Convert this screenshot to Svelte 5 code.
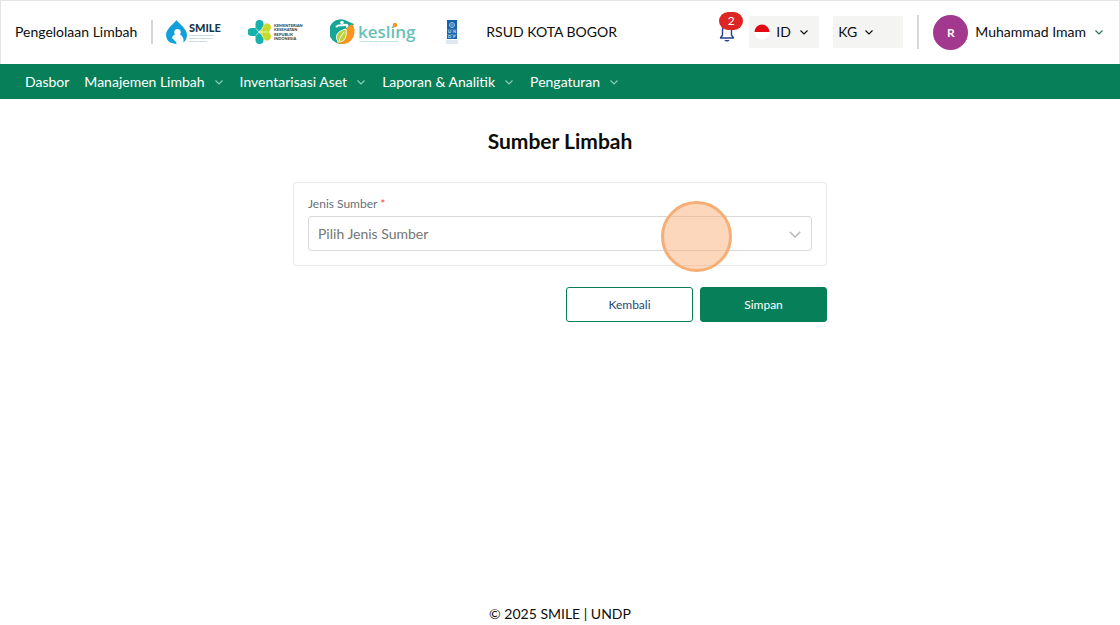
<script lang="ts">
  interface MenuItem {
    label: string;
    children: boolean;
  }

  const menu: MenuItem[] = [
    { label: 'Dasbor', children: false },
    { label: 'Manajemen Limbah', children: true },
    { label: 'Inventarisasi Aset', children: true },
    { label: 'Laporan & Analitik', children: true },
    { label: 'Pengaturan', children: true }
  ];

  const sources = ['Internal', 'Eksternal'];

  let source = $state('');
  let language = $state('ID');
  let unit = $state('KG');
  let notifications = $state(2);
</script>

{#snippet chevron(size: number)}
  <svg class="chevron" width={size} height={size} viewBox="0 0 12 12" aria-hidden="true">
    <path d="M2.5 4.5 6 8l3.5-3.5" fill="none" stroke="currentColor" stroke-width="1.1" />
  </svg>
{/snippet}

<div class="page">
  <header class="topbar">
    <span class="app-name">Pengelolaan Limbah</span>
    <span class="divider short"></span>

    <div class="logos">
      <svg width="56" height="28" viewBox="0 0 56 28" role="img" aria-label="SMILE">
        <path d="M10.500 2C13 6 21 10.500 21 17a10 10 0 0 1-3.500 7.500L10 26l-6-1.500A10 10 0 0 1 0 17C0 10.500 8 6 10.500 2Z" fill="#12a0dc" />
        <path d="M11.500 11c2 0 3.300 1.500 3.300 3.300 0 1-.3 1.700-.8 2.300 2.500 1.400 4 3.800 3.500 7.900L11 27l-1-3-4-4c.4-1.600 1.400-2.700 3-3.400-.5-.6-.8-1.300-.8-2.300 0-1.800 1.300-3.300 3.300-3.300Z" fill="#fff" />
        <path d="M3 24.500 5 27l-5-1z" fill="#fff" />
        <text x="23" y="14" class="smile">SMILE</text>
        <text x="23" y="18" class="tiny">Sistem Monitoring Imunisasi</text>
        <text x="23" y="21" class="tiny">Logistik dan Limbah Secara</text>
        <text x="23" y="24" class="tiny">Elektronik Indonesia</text>
      </svg>

      <svg width="56" height="28" viewBox="0 0 56 28" role="img" aria-label="Kementerian Kesehatan Republik Indonesia">
        <g fill="none" stroke-width="8" stroke-linecap="round" stroke-linejoin="round">
          <path d="M3.500 14H8M11.500 6v4M11.500 18v4" stroke="#17b2b0" />
          <path d="M19 9.500 15.500 14l3.500 4.500" stroke="#c5da2e" />
        </g>
        <path d="M7.500 10h8v8h-8z" fill="#17b2b0" />
        <path d="M11 14l4.500-4.500v9z" fill="#e2e52f" />
        <path d="m8 10.500 3 3.500-3 3.500M16 8.500 11 14l5 5.500M11 14h9" fill="none" stroke="#fff" stroke-width=".7" />
        <text x="26" y="9" class="ministry">KEMENTERIAN</text>
        <text x="26" y="13" class="ministry">KESEHATAN</text>
        <text x="26" y="18" class="ministry">REPUBLIK</text>
        <text x="26" y="22" class="ministry">INDONESIA</text>
      </svg>

      <svg width="90" height="28" viewBox="0 0 90 28" role="img" aria-label="Kesling">
        <path d="M17 3A12 12 0 1 0 5 24c3 2 7 3 11 1 5-3 2-10 8-19Z" fill="#16a697" />
        <path d="M22 6a12.500 12.500 0 0 1-9 20c-3 0-5-1-7-2 9 0 8-8 9-11s4-5 7-7Z" fill="#f7951f" />
        <path d="M8 24c-4-7 0-11 8-13 1 8-1 13-8 13Z" fill="#b8d436" stroke="#fff" />
        <path d="M9 23c1-4 3-6 5-9" fill="none" stroke="#fff" />
        <path d="M6 9c3-3 6-1 8-2 3-1 5 1 2 2" fill="none" stroke="#fff" stroke-width="2" />
        <circle cx="12" cy="4.500" r="1.800" fill="#fff" />
        <text x="28" y="20" class="kesling">kesling</text>
        <circle cx="65" cy="7" r="2.200" fill="#f7951f" />
        <text x="29" y="24" class="tiny teal">Kesehatan Lingkungan dan Limbah Fasyankes</text>
      </svg>

      <svg width="12" height="28" viewBox="0 0 12 28" role="img" aria-label="UNDP">
        <path d="M1 2h10v19H1z" fill="#1763ac" />
        <circle cx="6" cy="7" r="2.500" fill="none" stroke="#9fc3e4" />
        <path d="M3 7h6M6 4v6" stroke="#9fc3e4" stroke-width=".6" />
        <path d="M1 11.500h10M6 11.500V21M1 16.500h10" stroke="#6f9fcd" stroke-width=".5" />
        <text x="2" y="15" class="undp">U</text>
        <text x="7" y="15" class="undp">N</text>
        <text x="2" y="20" class="undp">D</text>
        <text x="7" y="20" class="undp">P</text>
        <path d="M0 23h12M0 25h12" stroke="#bcd3e8" />
      </svg>
    </div>

    <span class="facility">RSUD KOTA BOGOR</span>

    <div class="tools">
      <button class="bell" aria-label="Notifikasi">
        <svg width="16" height="20" viewBox="0 0 16 20" aria-hidden="true">
          <path d="M3.500 13V8a4.500 4.500 0 0 1 9 0v5l2 3h-13z" fill="none" stroke="#27408f" stroke-width="1.400" stroke-linejoin="round" />
          <path d="M5.500 18h5c-.5 1.300-1.500 1.500-2.500 1.500s-2-.2-2.500-1.500Z" fill="#27408f" />
        </svg>
        <span class="badge">{notifications}</span>
      </button>

      <div class="picker">
        <svg width="16" height="16" viewBox="0 0 16 16" aria-hidden="true">
          <circle cx="8" cy="8" r="7.500" fill="#fff" />
          <path d="M.5 8a7.500 7.500 0 0 1 15 0z" fill="#e30613" />
        </svg>
        <select class="lang" aria-label="Bahasa" bind:value={language}>
          <option>ID</option>
          <option>EN</option>
        </select>
        {@render chevron(12)}
      </div>

      <div class="picker">
        <select aria-label="Satuan" bind:value={unit}>
          <option>KG</option>
          <option>L</option>
        </select>
        {@render chevron(12)}
      </div>

      <span class="divider"></span>

      <button class="profile">
        <span class="avatar">R</span>
        <span>Muhammad Imam</span>
        {@render chevron(12)}
      </button>
    </div>
  </header>

  <nav class="menu">
    {#each menu as item (item.label)}
      {#if item.children}
        <button>{item.label}{@render chevron(12)}</button>
      {:else}
        <a href="#dasbor">{item.label}</a>
      {/if}
    {/each}
  </nav>

  <main>
    <h1>Sumber Limbah</h1>
    <form onsubmit={(e) => e.preventDefault()}>
      <div class="card">
        <label for="source">Jenis Sumber <span class="required">*</span></label>
        <div class="field">
          <select id="source" bind:value={source}>
            <option value="">Pilih Jenis Sumber</option>
            {#each sources as s (s)}
              <option value={s}>{s}</option>
            {/each}
          </select>
          {@render chevron(18)}
          <span class="pointer"></span>
        </div>
      </div>
      <div class="actions">
        <button type="button">Kembali</button>
        <button type="submit" class="primary">Simpan</button>
      </div>
    </form>
  </main>

  <footer>© 2025 SMILE | UNDP</footer>
</div>

<style>
  :global(body) { margin: 0; }

  .page {
    display: flex;
    flex-direction: column;
    min-height: 100vh;
    font-family: Lato, sans-serif;
    font-size: 14px;
    line-height: 20px;
    color: #0c0c0c;
    background: #fff;
  }

  button, select {
    font: inherit;
    color: inherit;
    border: 0;
    background: none;
    padding: 0;
    margin: 0;
    cursor: pointer;
  }
  select { appearance: none; }
  svg { flex: none; }

  .topbar {
    display: flex;
    align-items: center;
    box-sizing: border-box;
    height: 64px;
    padding: 0 14px 1px;
    border: 1px solid #e4e4e4;
    border-bottom: 0;
    white-space: nowrap;
  }
  .divider {
    width: 2px;
    height: 34px;
    background: #d8d8d8;
  }
  .divider.short {
    height: 24px;
    margin: 0 13px 0 14px;
  }

  .logos {
    display: flex;
    align-items: center;
    gap: 26px;
  }
  .smile { font: 900 11px Lato, sans-serif; fill: #17384c; }
  .tiny { font: 2px Lato, sans-serif; fill: #7fa0b4; }
  .tiny.teal { fill: #6bbfb6; }
  .ministry { font: 900 4px Lato, sans-serif; fill: #33484a; }
  .kesling { font: 600 17px "Open Sans", sans-serif; fill: #68c1b7; }
  .undp { font: 700 4px Lato, sans-serif; fill: #d5e6f5; }

  .facility { margin-left: 28px; }

  .tools {
    display: flex;
    align-items: center;
    gap: 14px;
    margin-left: auto;
  }

  .bell {
    position: relative;
    display: flex;
  }
  .badge {
    position: absolute;
    top: -10px;
    left: 0;
    width: 24px;
    border-radius: 9px;
    background: #dc2626;
    color: #fff;
    font-size: 12px;
    line-height: 18px;
  }

  .picker {
    display: flex;
    align-items: center;
    gap: 6px;
    box-sizing: border-box;
    width: 70px;
    height: 32px;
    padding: 0 5px;
    background: #f4f4f3;
  }
  .picker .lang { width: 16px; }

  .profile {
    display: flex;
    align-items: center;
    gap: 7px;
  }
  .profile .chevron { color: #1f6b5c; }
  .avatar {
    width: 35px;
    border-radius: 50%;
    background: #a3388f;
    color: #fff;
    font-size: 12px;
    font-weight: 700;
    line-height: 35px;
  }

  .menu {
    display: flex;
    align-items: center;
    gap: 15px;
    height: 35px;
    padding: 0 25px;
    background: #07805a;
    color: #fff;
    white-space: nowrap;
  }
  .menu a {
    color: inherit;
    text-decoration: none;
  }
  .menu button {
    display: flex;
    align-items: center;
    gap: 8px;
  }
  .menu .chevron { color: #8fd0b5; }

  main {
    flex: 1;
    padding: 28px 16px;
  }
  h1 {
    margin: 0 0 27px;
    font-size: 21px;
    line-height: 28px;
    text-align: center;
  }
  form {
    max-width: 534px;
    margin: 0 auto;
  }
  .card {
    padding: 14px;
    border: 1px solid #e8e8e8;
    border-radius: 3px;
  }
  label {
    display: block;
    margin-bottom: 5px;
    font-size: 12px;
    line-height: 14px;
    color: #6a7078;
  }
  .required { color: #e5484d; }

  .field {
    position: relative;
    display: flex;
    align-items: center;
  }
  .field select {
    flex: 1;
    height: 35px;
    padding: 0 9px;
    border: 1px solid #d9d9d9;
    border-radius: 3px;
    color: #757575;
  }
  .field .chevron {
    position: absolute;
    right: 8px;
    color: #bdbdbd;
    pointer-events: none;
  }
  .pointer {
    position: absolute;
    right: 80px;
    box-sizing: border-box;
    width: 71px;
    height: 71px;
    margin-top: 5px;
    border: 3px solid #f5ae76;
    border-radius: 50%;
    background: rgb(249 171 112 / 47%);
    pointer-events: none;
  }

  .actions {
    display: flex;
    justify-content: flex-end;
    gap: 7px;
    margin-top: 21px;
  }
  .actions button {
    width: 127px;
    height: 35px;
    border: 1px solid #07805a;
    border-radius: 3px;
    color: #1d4b79;
    font-size: 12px;
  }
  .actions .primary {
    background: #07805a;
    color: #fff;
  }

  footer {
    padding-bottom: 1px;
    text-align: center;
  }
</style>
